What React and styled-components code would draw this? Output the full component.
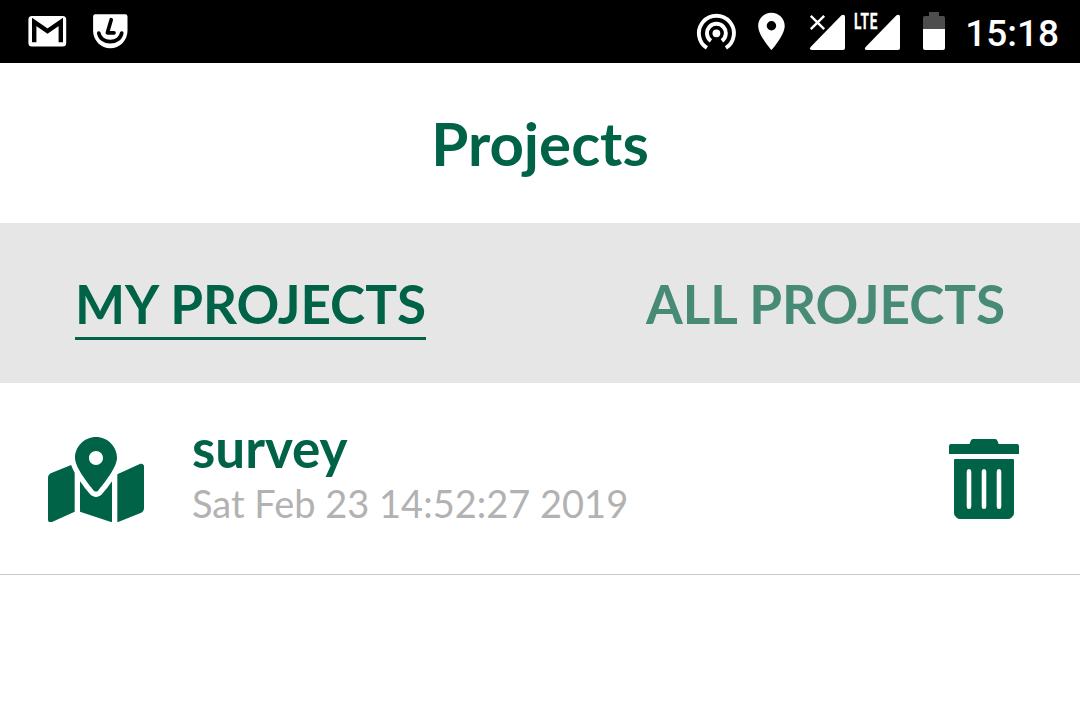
import React from 'react';
import styled, { createGlobalStyle } from 'styled-components';
import { FaMapMarkedAlt } from 'react-icons/fa';

const GlobalStyle = createGlobalStyle`
  * { box-sizing: border-box; }
  body { margin: 0; background: #fff; }
`;

const green = '#006247';

const Screen = styled.div`
  display: flex;
  flex-direction: column;
  width: 1080px;
  height: 708px;
  overflow: hidden;
  background: #fff;
  color: ${green};
  font-family: Lato, sans-serif;
`;

const StatusBar = styled.header`
  display: flex;
  justify-content: space-between;
  height: 63px;
  flex: none;
  padding: 0 21px 0 28px;
  background: #000;
  color: #fff;
`;

const StatusGroup = styled.div`
  display: flex;
  align-items: flex-start;
`;

const StatusIcon = styled.svg`
  display: block;
  flex: none;
  width: ${(p) => p.$width}px;
  height: 63px;
  margin-right: ${(p) => p.$gap || 0}px;
`;

const NetworkSignal = styled.div`
  position: relative;
  margin-right: 23px;
`;

const NetworkLabel = styled.span`
  position: absolute;
  left: 0;
  top: 11px;
  font: 700 22px/22px Roboto, sans-serif;
  letter-spacing: 1.2px;
  -webkit-text-stroke: 0.3px #fff;
  transform: scaleX(0.62);
  transform-origin: left center;
`;

const Clock = styled.time`
  width: 94px;
  font: 500 37px/67px Roboto, sans-serif;
  text-align: right;
  white-space: nowrap;
`;

const TitleBar = styled.div`
  display: flex;
  align-items: center;
  justify-content: center;
  height: 160px;
  flex: none;
`;

const Title = styled.h1`
  margin: 0;
  font-size: 60px;
  line-height: 72px;
  font-weight: 700;
`;

const Tabs = styled.nav`
  display: flex;
  justify-content: space-between;
  height: 160px;
  flex: none;
  padding: 48px 75px 0;
  background: #e6e6e6;
`;

const Tab = styled.button`
  height: 69px;
  padding: 0;
  border: 0;
  border-bottom: 3px solid ${(p) => (p.$active ? green : 'transparent')};
  background: none;
  color: ${(p) => (p.$active ? green : '#478a76')};
  font: 700 53px/66px Lato, sans-serif;
  white-space: nowrap;
`;

const ProjectRow = styled.section`
  display: flex;
  align-items: flex-start;
  height: 192px;
  flex: none;
  padding: 0 60px 0 48px;
  border-bottom: 1px solid #c8c8c8;
`;

const MapIcon = styled(FaMapMarkedAlt)`
  width: 96px;
  height: 85.33px;
  margin-top: 54px;
  flex: none;
`;

const ProjectInfo = styled.div`
  flex: 1;
  padding: 33px 0 0 48px;
`;

const ProjectName = styled.div`
  font-size: 53px;
  line-height: 64px;
  font-weight: 700;
`;

const ProjectDate = styled.div`
  margin-top: 3px;
  color: #b2b2b2;
  font-size: 38px;
  line-height: 40px;
`;

const DeleteButton = styled.button`
  margin: 56px 0 0;
  padding: 0;
  border: 0;
  background: none;
  color: ${green};

  svg { display: block; }
`;

export default function App() {
  return (
    <>
      <GlobalStyle />
      <Screen>
        <StatusBar>
          <StatusGroup>
            <StatusIcon $width={39} $gap={26} viewBox="28 0 39 63">
              <rect x="28.4" y="16" width="37.8" height="30.6" rx="3.5" fill="#fff" />
              <path d="M34.2 42.3V22l13.3 9L60.8 22v20.3" fill="none" stroke="#000" strokeWidth="4.4" />
            </StatusIcon>
            <StatusIcon $width={35} viewBox="93 0 35 63">
              <path d="M95.5 14.2h29.7a2.3 2.3 0 0 1 2.3 2.3V31a17.2 17.2 0 0 1-34.4 0V16.5a2.3 2.3 0 0 1 2.4-2.3z" fill="#fff" />
              <path d="M111.2 19.7L107.4 32.8H114M98.8 33a11.5 9.6 0 0 0 22.9 0" fill="none" stroke="#000" strokeWidth="3.7" strokeLinecap="round" strokeLinejoin="round" />
            </StatusIcon>
          </StatusGroup>
          <StatusGroup>
            <StatusIcon $width={40} $gap={21} viewBox="696 0 40 63">
              <circle cx="716.4" cy="33.3" r="3.9" fill="#fff" />
              <path d="M710.9 40.8a9.4 9.4 0 1 1 11 0M706.9 47.9a17.5 17.5 0 1 1 19 0" fill="none" stroke="#fff" strokeWidth="3.9" />
            </StatusIcon>
            <StatusIcon $width={29} $gap={23} viewBox="757 0 29 63">
              <g transform="translate(748.7 8.9) scale(1.895 1.87)">
                <path fill="#fff" d="M12 2C8.13 2 5 5.13 5 9c0 5.25 7 13 7 13s7-7.75 7-13c0-3.87-3.13-7-7-7zm0 9.5a2.5 2.5 0 1 1 0-5 2.5 2.5 0 0 1 0 5z" />
              </g>
            </StatusIcon>
            <StatusIcon $width={37} $gap={8} viewBox="809 0 37 63">
              <path d="M841.5 15.2q3.5-1.5 3.5 1.7V48q0 2-2 2h-31.2q-3.2 0-1.2-3z" fill="#fff" />
              <path d="M810.8 15.8l13.4 13.4m0-13.4l-13.4 13.4" stroke="#fff" strokeWidth="2.4" />
            </StatusIcon>
            <NetworkSignal>
              <StatusIcon $width={46} viewBox="854 0 46 63">
                <path d="M896.5 15.2q3.5-1.5 3.5 1.7V48q0 2-2 2h-31.2q-3.2 0-1.2-3z" fill="#fff" />
              </StatusIcon>
              <NetworkLabel>LTE</NetworkLabel>
            </NetworkSignal>
            <StatusIcon $width={22} $gap={20} viewBox="923 0 22 63">
              <path d="M929 12h10v4h4q2 0 2 2v12h-22V18q0-2 2-2h4z" fill="#4d4d4d" />
              <path d="M923 29h22v19q0 2-2 2h-18q-2 0-2-2z" fill="#fff" />
            </StatusIcon>
            <Clock>15:18</Clock>
          </StatusGroup>
        </StatusBar>
        <TitleBar>
          <Title>Projects</Title>
        </TitleBar>
        <Tabs>
          <Tab $active>MY PROJECTS</Tab>
          <Tab>ALL PROJECTS</Tab>
        </Tabs>
        <ProjectRow>
          <MapIcon />
          <ProjectInfo>
            <ProjectName>survey</ProjectName>
            <ProjectDate>Sat Feb 23 14:52:27 2019</ProjectDate>
          </ProjectInfo>
          <DeleteButton aria-label="Delete project">
            <svg width="71" height="80" viewBox="0 0 71 80" fill="currentColor">
              <path d="M24 0h22q2 0 2.5 2l1.2 3H68q2 0 2 2v8H0V7q0-2 2-2h18.5l1.2-3Q22.3 0 24 0z" />
              <path fillRule="evenodd" d="M6 20h58q1 0 1 1v53q0 2-1.5 3.5l-1 1Q61 80 59 80H11q-2 0-3.5-1.5l-1-1Q5 76 5 74V21q0-1 1-1zM20 30q-2.3 0-2.3 2.5v35q0 2.5 2.3 2.5t2.3-2.5v-35Q22.3 30 20 30zM35 30q-2.3 0-2.3 2.5v35q0 2.5 2.3 2.5t2.3-2.5v-35Q37.3 30 35 30zM50 30q-2.3 0-2.3 2.5v35q0 2.5 2.3 2.5t2.3-2.5v-35Q52.3 30 50 30z" />
            </svg>
          </DeleteButton>
        </ProjectRow>
      </Screen>
    </>
  );
}
